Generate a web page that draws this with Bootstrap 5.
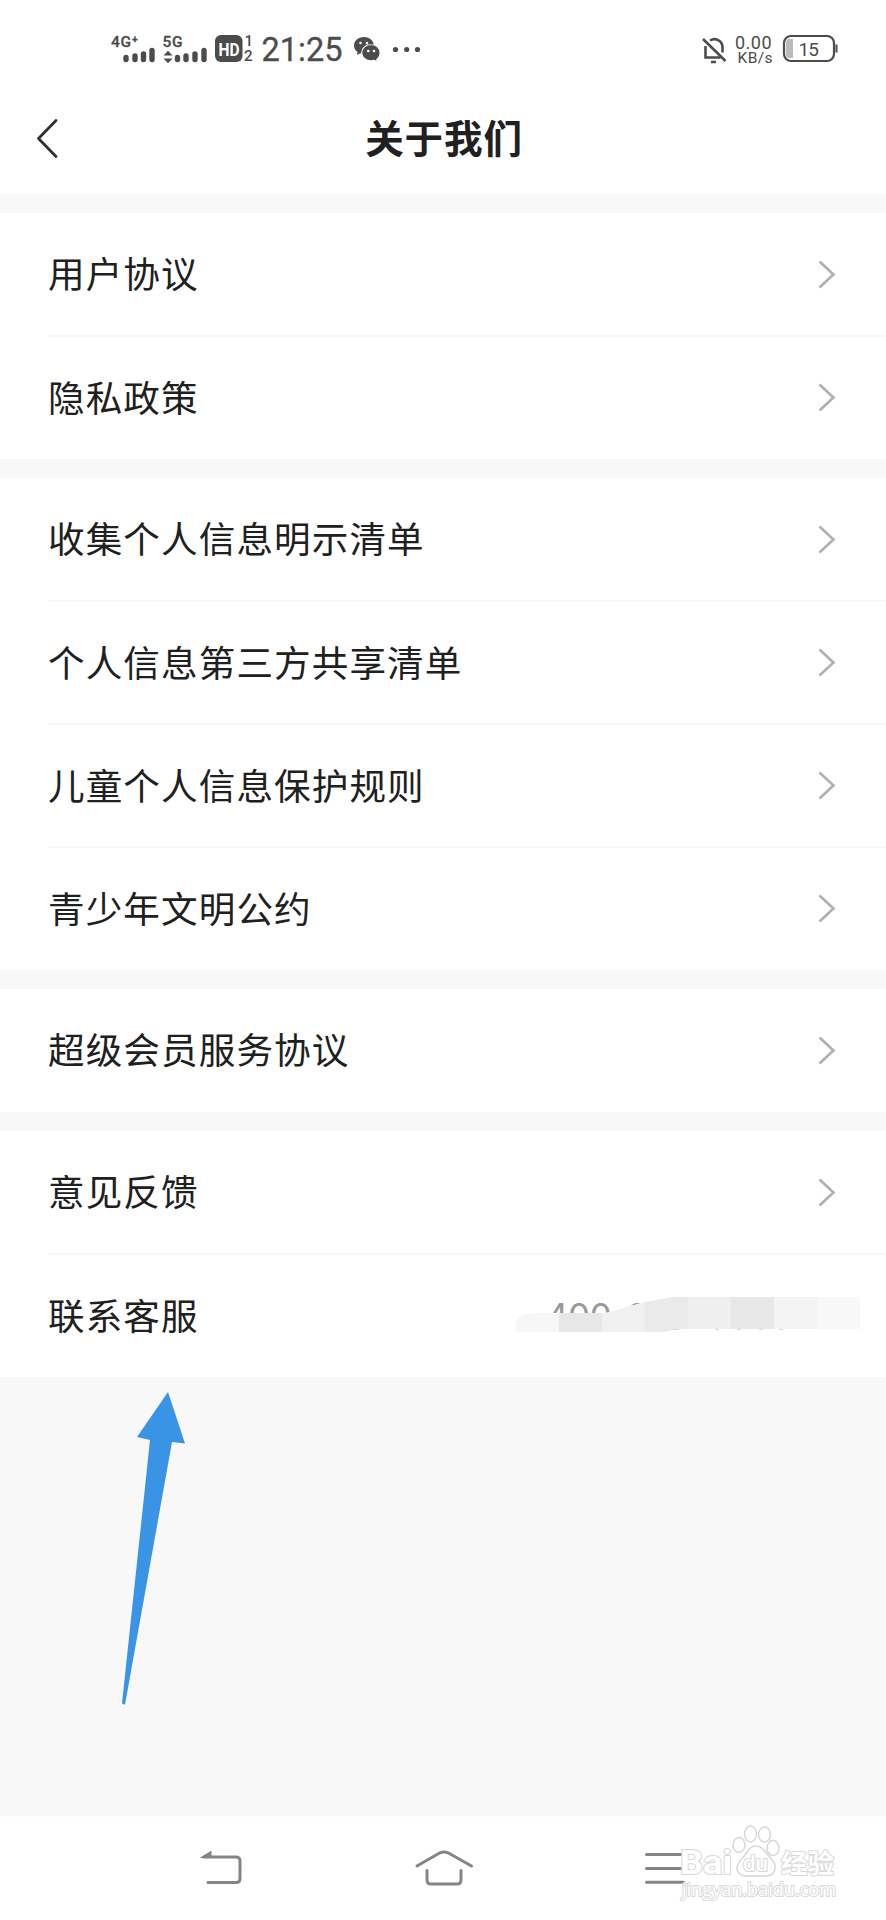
<!DOCTYPE html>
<html lang="zh-CN">
<head>
<meta charset="utf-8">
<meta name="viewport" content="width=device-width, initial-scale=1">
<title>关于我们</title>
<link href="https://cdn.jsdelivr.net/npm/bootstrap@5.3.0/dist/css/bootstrap.min.css" rel="stylesheet">
<style>
  body { background: #f8f8f8; color: #202020; font-family: Roboto, "Noto Sans CJK SC", sans-serif; }
  .screen { height: 1920px; overflow: hidden; }
  .status { height: 98px; }
  .titlebar { height: 96px; }
  .titlebar h1 { font-size: 38.5px; font-weight: 700; letter-spacing: .9px; line-height: 84px; padding-left: 2px; }
  .back-btn { width: 60px; height: 60px; left: 19px; top: 10px; }
  .groups { gap: 19px; margin-top: 19px; }
  .entry { height: 123px; margin-left: 48px; padding-right: 50px; font-size: 36.6px; letter-spacing: 1.1px; line-height: 54px; }
  .entry > span { padding-top: 3px; }
  .entry + .entry { border-top: 2px solid #f8f8f8; margin-top: -1px; height: 124px; }
  .phone { color: #999; font-family: Inter, sans-serif; font-size: 35px; letter-spacing: -.5px; width: 290px; line-height: 54px; }
  .mosaic { left: -30px; top: 7px; }
  .pointer { left: 120px; top: 1391px; }
  .sysnav { height: 104px; }
  .mark-logo { right: 40px; top: 2px; }
  svg { display: block; }
  svg text { font-family: Roboto, "Noto Sans CJK SC", sans-serif; }
</style>
</head>
<body>
<div class="screen position-relative d-flex flex-column">
  <header class="bg-white">
    <div class="status d-flex justify-content-between">
      <svg width="440" height="98" fill="#4c4c4c">
        <g font-weight="500" stroke="#4c4c4c" stroke-width=".3">
          <text x="111" y="46.500" font-size="15.500" textLength="27">4G⁺</text>
          <text x="162.500" y="46.500" font-size="15.500" textLength="20">5G</text>
        </g>
        <g stroke="#4c4c4c" stroke-width="5.400" stroke-linecap="round">
          <path d="M126 57.500v2M135 56v3.500M143.500 54v5.500M152 50.500v9M177.500 57.500v2M186 56v3.500M195 54v5.500M204 50.500v9"/>
        </g>
        <path d="M163.500 55.500l4.500-4.800 4.500 4.800zM163.500 58.500h9l-4.500 4.800z"/>
        <rect x="215" y="35" width="27.500" height="27" rx="6"/>
        <text x="218.500" y="55.500" font-size="18" font-weight="700" fill="#fff" textLength="21" lengthAdjust="spacingAndGlyphs">HD</text>
        <g font-size="15" font-weight="500"><text x="244.500" y="46">1</text><text x="244" y="61">2</text></g>
        <text x="261.500" y="60.500" font-size="32.500" textLength="81" stroke="#4c4c4c" stroke-width=".3">21:25</text>
        <path d="M364 37c-5.800 0-10 3.700-10 8.500 0 2.800 1.400 5 3.600 6.600l-.8 3 3.500-1.800c1.200.4 2.400.5 3.700.5 5.600 0 9.800-3.700 9.800-8.300S369.600 37 364 37z"/>
        <path stroke="#fff" stroke-width="1.200" d="M371 44.500c-5.200 0-9.300 3.500-9.300 8.200s4.100 8.200 9.300 8.200c1.200 0 2.300-.2 3.300-.5l3 1.700-.5-2.700c2.100-1.500 3.300-3.900 3.300-6.700 0-4.700-4-8.200-9.100-8.200z"/>
        <g fill="#fff"><circle cx="360.500" cy="43" r="1.300"/><circle cx="367" cy="43" r="1.300"/><circle cx="368.300" cy="51" r="1.300"/><circle cx="374" cy="51" r="1.300"/></g>
        <circle cx="395.500" cy="49.500" r="2.600"/><circle cx="406.700" cy="49.500" r="2.600"/><circle cx="417.500" cy="49.500" r="2.600"/>
      </svg>
      <svg width="196" height="98" fill="#4c4c4c">
        <g fill="none" stroke="#4c4c4c" stroke-width="2.600">
          <path d="M13 39l22.500 22M15.500 46V57.500h15M20 40.500c5-3 12.500-.5 12.500 7v5"/>
          <path d="M21 62h5" stroke-width="2.500"/>
        </g>
        <text x="45" y="48.500" font-size="18" textLength="36.500">0.00</text>
        <text x="47.500" y="63" font-size="15.500" textLength="35">KB/s</text>
        <rect x="94" y="36" width="50" height="25" rx="7" fill="none" stroke="#4c4c4c" stroke-width="2.200"/>
        <path d="M98 39h5v19h-5q-2-1-2-4v-11q0-3 2-4z" fill="#bbb"/>
        <rect x="145.500" y="44.500" width="2" height="8"/>
        <text x="108.500" y="55.500" font-size="19" textLength="20.500">15</text>
      </svg>
    </div>
    <div class="titlebar position-relative text-center">
      <a href="#" class="back-btn position-absolute" aria-label="返回">
        <svg width="60" height="60" fill="none" stroke="#303030" stroke-width="2.800" stroke-linecap="round" stroke-linejoin="round"><path d="M37 12.500 19.500 30.500 37 48.500"/></svg>
      </a>
      <h1 class="m-0">关于我们</h1>
    </div>
  </header>

  <svg class="d-none"><symbol id="chev" viewBox="0 0 18 30"><path d="M1.500 1.500 15.500 14.500 1.500 27.500" fill="none" stroke="#b0b0b0" stroke-width="2.600"/></symbol></svg>

  <main class="groups d-flex flex-column">
    <section class="bg-white">
      <div class="entry d-flex align-items-center justify-content-between"><span>用户协议</span><svg width="18" height="30"><use href="#chev"/></svg></div>
      <div class="entry d-flex align-items-center justify-content-between"><span>隐私政策</span><svg width="18" height="30"><use href="#chev"/></svg></div>
    </section>
    <section class="bg-white">
      <div class="entry d-flex align-items-center justify-content-between"><span>收集个人信息明示清单</span><svg width="18" height="30"><use href="#chev"/></svg></div>
      <div class="entry d-flex align-items-center justify-content-between"><span>个人信息第三方共享清单</span><svg width="18" height="30"><use href="#chev"/></svg></div>
      <div class="entry d-flex align-items-center justify-content-between"><span>儿童个人信息保护规则</span><svg width="18" height="30"><use href="#chev"/></svg></div>
      <div class="entry d-flex align-items-center justify-content-between"><span>青少年文明公约</span><svg width="18" height="30"><use href="#chev"/></svg></div>
    </section>
    <section class="bg-white">
      <div class="entry d-flex align-items-center justify-content-between"><span>超级会员服务协议</span><svg width="18" height="30"><use href="#chev"/></svg></div>
    </section>
    <section class="bg-white">
      <div class="entry d-flex align-items-center justify-content-between"><span>意见反馈</span><svg width="18" height="30"><use href="#chev"/></svg></div>
      <div class="entry d-flex align-items-center justify-content-between"><span>联系客服</span>
        <div class="phone position-relative">400-8
          <svg class="mosaic position-absolute" width="346" height="44">
            <clipPath id="smear"><path d="M0 36V25Q4 18 18 17H90L129 6 156 1H344V33H162L148 36Z"/></clipPath>
            <path d="M0 36V17H90L129 6 156 1H344V50H0Z" fill="#fff"/>
            <g clip-path="url(#smear)">
              <path fill="#f7f7f7" d="M0 0h43v44H0z"/><path fill="#e7e7e7" d="M43 0h43v44H43z"/>
              <path fill="#f0f0f0" d="M86 0h43v44H86z"/><path fill="#eaeaea" d="M129 0h43v44h-43z"/>
              <path fill="#efefef" d="M172 0h43v44h-43z"/><path fill="#e7e7e7" d="M215 0h43v44h-43z"/>
              <path fill="#f4f4f4" d="M258 0h43v44h-43z"/><path fill="#f8f8f8" d="M301 0h43v44h-43z"/>
            </g>
            <path d="M157 33.500h6M199 33.500h4M221 33.500h4M243 33.500h4M263 33.500h4" stroke="#d8d8d8"/>
          </svg>
        </div>
      </div>
    </section>
  </main>

  <svg class="pointer position-absolute" width="70" height="316"><path d="M48 1 17 46l13 3L2 312.500l3 1.200L52 51l13 1.500Z" fill="#3a94e6"/></svg>

  <nav class="sysnav bg-white mt-auto position-relative">
    <svg width="886" height="104" fill="none" stroke="#858585" stroke-width="3" stroke-linecap="round" stroke-linejoin="round">
      <path d="M0 7.500H886" stroke="#fcfcfc" stroke-width="1"/>
      <path d="M204 41h32q4 0 4 4v17.500q0 4-4 4h-28"/><path d="M199.500 42 211.500 34.500V42Z" fill="#858585" stroke="none"/>
      <path d="M417 50 440 36.800q4-1.800 8 0L471.500 50M427 54.500V64q0 4 4 4h26q4 0 4-4V54.500"/>
      <path d="M646.500 38.500h36M646.500 52.500h36M646.500 66.300h37"/>
    </svg>
    <svg class="mark-logo position-absolute" width="170" height="100" fill="#fff" stroke="#d8d8d8" stroke-width="2" stroke-linejoin="round">
      <text x="4" y="56" font-size="34" font-weight="700" textLength="52" lengthAdjust="spacingAndGlyphs" paint-order="stroke">Bai</text>
      <g stroke-width="1.500">
        <ellipse cx="63" cy="27" rx="6" ry="7.500"/><ellipse cx="74.500" cy="16" rx="6" ry="8"/><ellipse cx="88.500" cy="16.500" rx="6" ry="7.500"/><ellipse cx="97" cy="30" rx="6" ry="7.500"/>
        <path d="M80 28c6 0 9 5 12 9 4 5 8 8 7 14-1 5-5 7-10 7H71c-6 0-10-3-10-8s4-8 8-13c3-4 5-9 11-9z"/>
      </g>
      <text x="67" y="53" font-size="22" textLength="25" lengthAdjust="spacingAndGlyphs" font-weight="500" paint-order="stroke">du</text>
      <text x="105" y="55" font-size="26.500" font-weight="700" textLength="53" paint-order="stroke">经验</text>
      <text x="6" y="77.500" font-size="17.500" textLength="154" lengthAdjust="spacingAndGlyphs" paint-order="stroke" style="font-family:'Open Sans',sans-serif">jingyan.baidu.com</text>
    </svg>
  </nav>
</div>
<script src="https://cdn.jsdelivr.net/npm/bootstrap@5.3.0/dist/js/bootstrap.bundle.min.js"></script>
</body>
</html>
